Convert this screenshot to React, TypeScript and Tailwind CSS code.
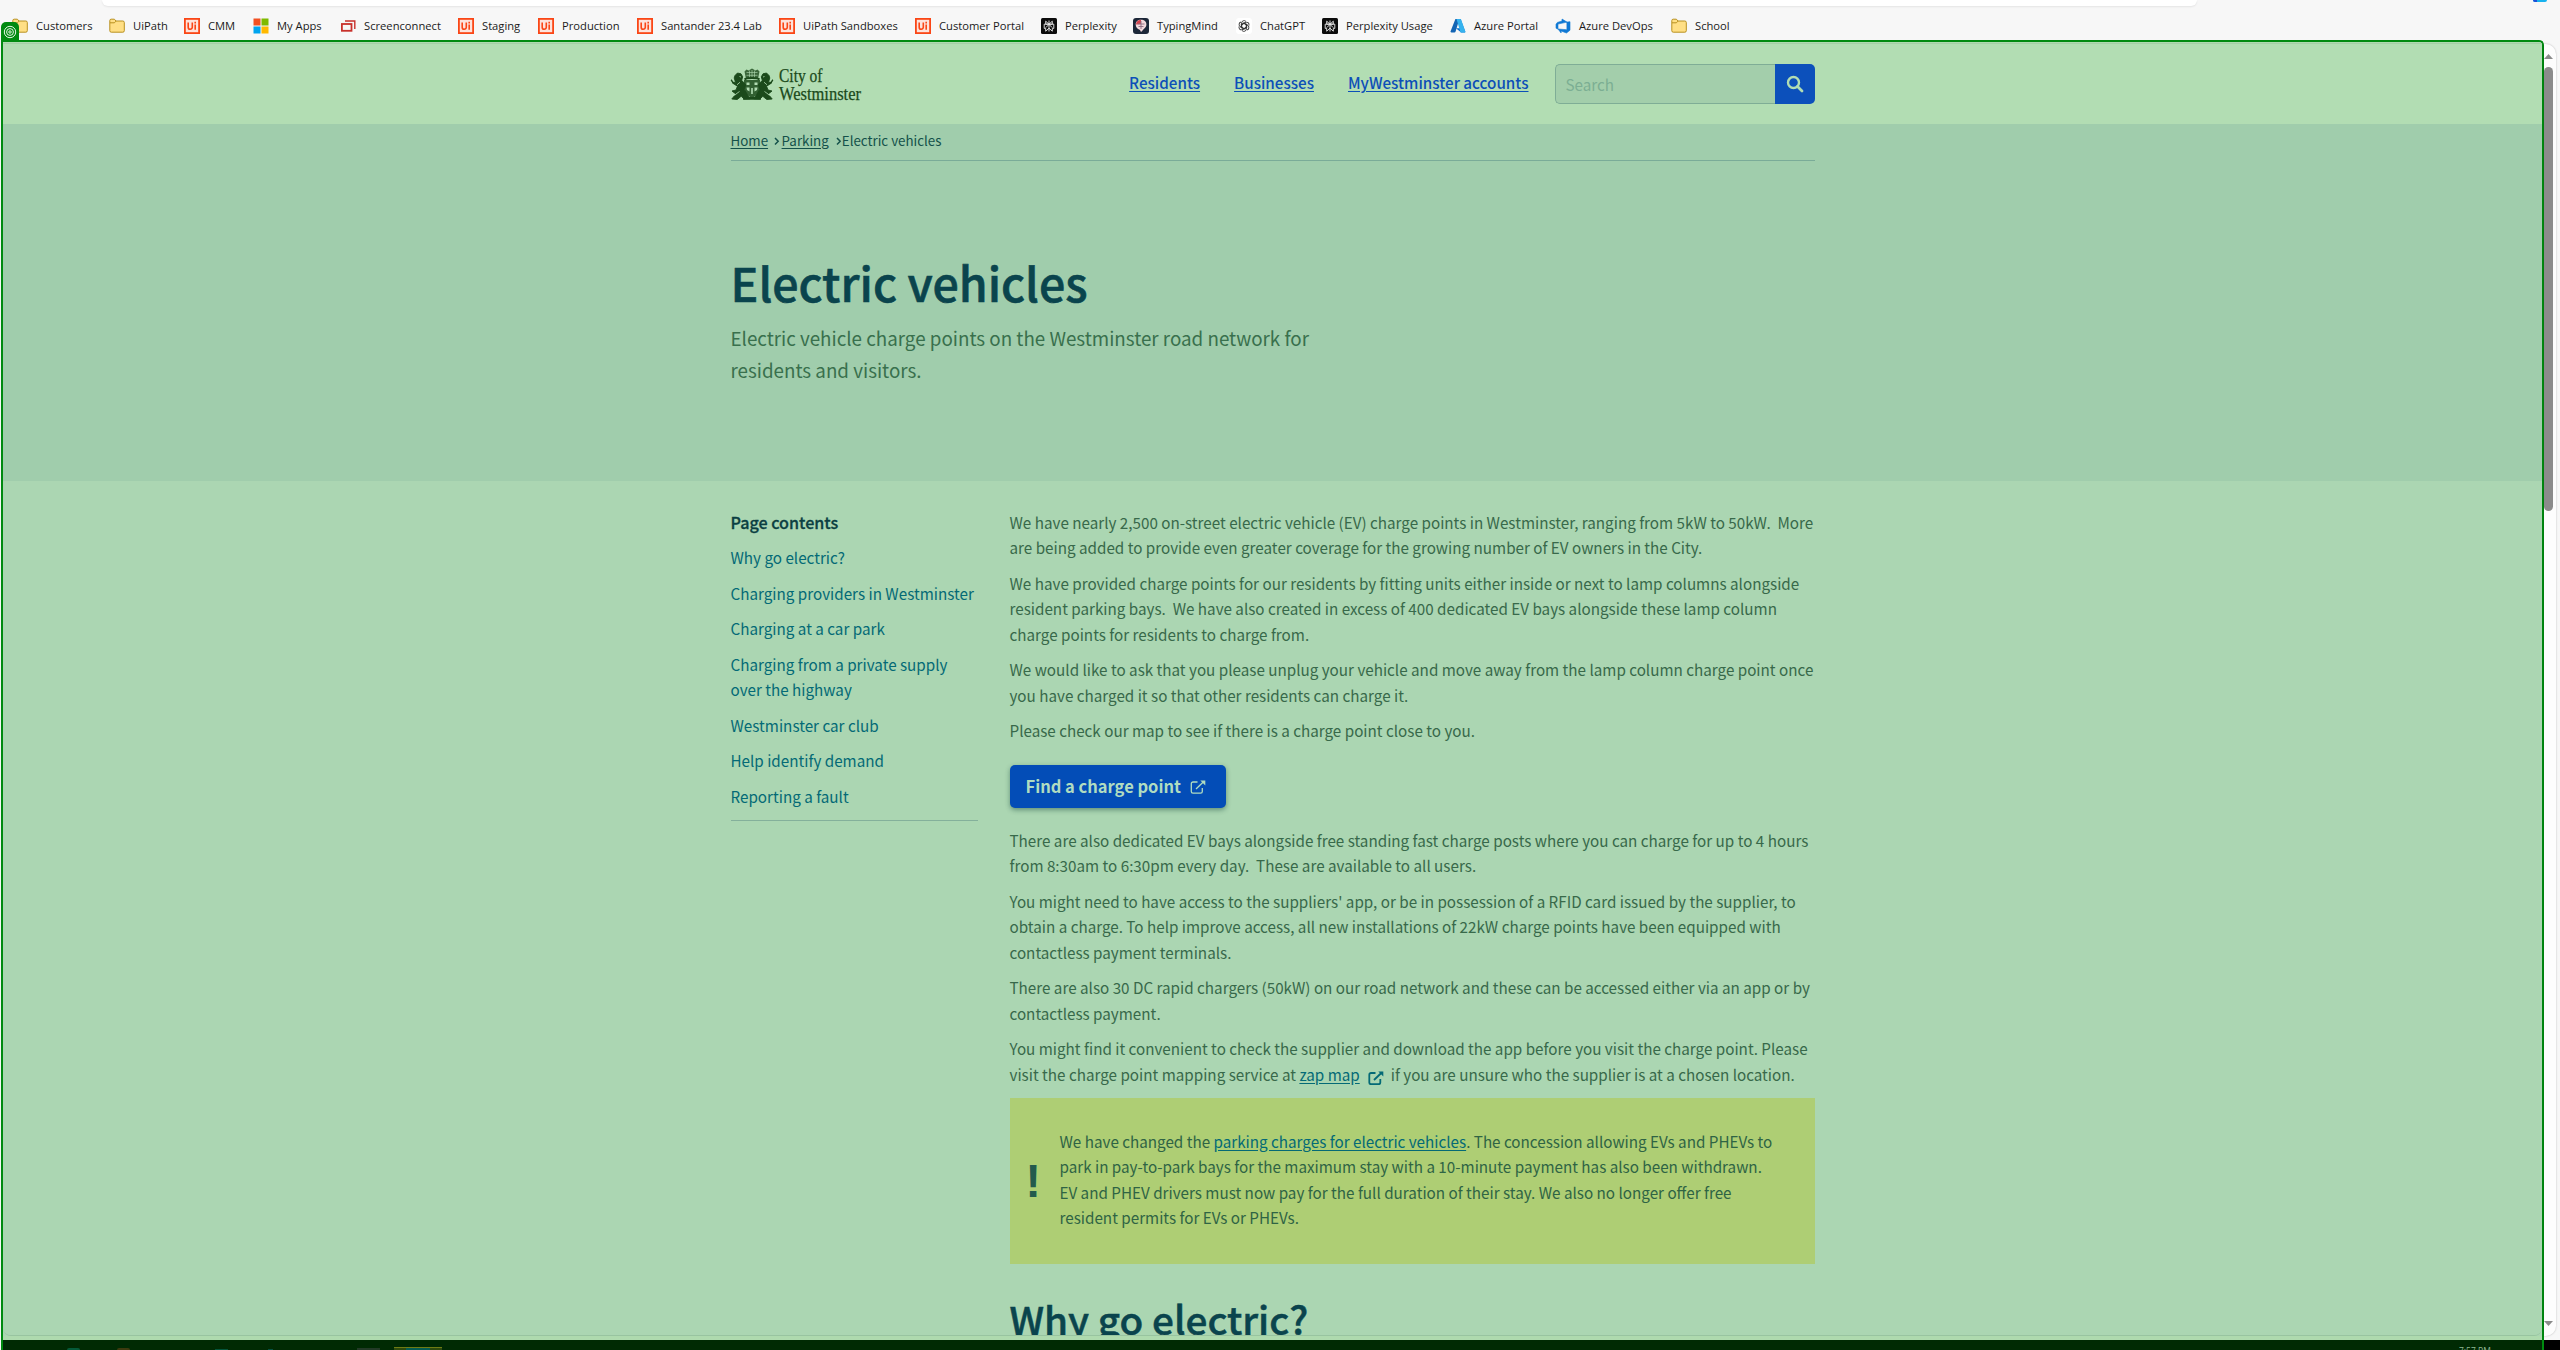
import type { ReactNode } from "react";

function Folder() {
  return (
    <svg width="16" height="16" viewBox="0 0 16 16">
      <path d="M.8 4V2.6A1.4 1.4 0 0 1 2.2 1.2h3.2L7 3h6.8a1.5 1.5 0 0 1 1.5 1.5v8.2a1.5 1.5 0 0 1-1.5 1.5H2.3a1.5 1.5 0 0 1-1.5-1.5z" fill="#ffdf85" stroke="#b8901f" strokeWidth="1" />
      <path d="M1 4.8h4.4L7 3.1" fill="none" stroke="#b8901f" strokeWidth="1" />
    </svg>
  );
}

function UiIcon() {
  return (
    <svg width="16" height="16" viewBox="0 0 16 16">
      <rect width="16" height="16" fill="#fa4616" />
      <rect x="1.8" y="1.8" width="12.4" height="12.4" fill="#fde3dc" />
      <path d="M4.2 4.4v4.8a2 2 0 0 0 4.1 0V4.4" fill="none" stroke="#fa4616" strokeWidth="1.6" />
      <path d="M11.2 6.6v5.2M11.2 3.8v1.6" stroke="#fa4616" strokeWidth="1.6" />
    </svg>
  );
}

function Microsoft() {
  return (
    <svg width="16" height="16" viewBox="0 0 16 16">
      <rect x=".5" y=".5" width="7" height="7" fill="#f25022" />
      <rect x="8.5" y=".5" width="7" height="7" fill="#7fba00" />
      <rect x=".5" y="8.5" width="7" height="7" fill="#00a4ef" />
      <rect x="8.5" y="8.5" width="7" height="7" fill="#ffb900" />
    </svg>
  );
}

function ScreenConnect() {
  return (
    <svg width="16" height="16" viewBox="0 0 16 16" fill="none" stroke="#c8312b">
      <rect x="1.9" y="6" width="9.6" height="6.8" strokeWidth="1.8" />
      <path d="M5 3h9.8v8" strokeWidth="1.4" />
    </svg>
  );
}

function PerplexityIcon() {
  return (
    <svg width="16" height="16" viewBox="0 0 16 16">
      <rect width="16" height="16" rx="1.5" fill="#0c0c0c" />
      <path d="M8 2.5v11M4.7 3.2 8 6.2l3.3-3v3H4.7zM3.2 6.2h9.6v4.2h-1.5v2.8L8 10.2l-3.3 3v-2.8H3.2zM8 6.4l-3.2 3.2M8 6.4l3.2 3.2" fill="none" stroke="#eee" strokeWidth=".9" />
    </svg>
  );
}

function TypingMind() {
  return (
    <svg width="16" height="16" viewBox="0 0 16 16">
      <rect width="16" height="16" rx="3" fill="#1c2738" />
      <path d="M8 1.8c3.4 0 5.4 2 5.4 4.6 0 3-2.6 4.2-4.6 6.8L8 14l-1-2C4 10.600 2.700 9 2.700 6.400 2.700 3.800 4.800 1.800 8 1.800z" fill="#f3d9dc" />
      <path d="M3 6.500C3 4 4.500 2 8 1.800V6z" fill="#d6454f" />
      <path d="M4.500 6h7M5.500 8.500h5M8 3v8" stroke="#8d6b80" strokeWidth=".9" />
    </svg>
  );
}

function ChatGpt() {
  return (
    <svg width="16" height="16" viewBox="0 0 16 16">
      <rect width="16" height="16" rx="3" fill="#fff" />
      <g fill="none" stroke="#333" strokeWidth=".9">
        {[0, 60, 120, 180, 240, 300].map((a) => (
          <path key={a} transform={`rotate(${a} 8 8)`} d="M5.600 9.300V5.200a2.500 2.500 0 0 1 4.400-1.700M7.100 4.900l3.500 2v3.500" />
        ))}
      </g>
    </svg>
  );
}

function AzureIcon() {
  return (
    <svg width="16" height="16" viewBox="0 0 16 16">
      <path d="M5.400 1h4L5.600 13.600c-.2.600-.6.900-1.200.9H1.400c-.7 0-1.100-.6-.8-1.200z" fill="#1465b4" />
      <path d="M9.400 1h1.200l4.700 12.400c.2.600-.2 1.100-.8 1.100h-3.300L5.900 10.300h5z" fill="#0a6fd0" />
      <path d="M6.500 1h3.800c.4 0 .7.300.8.600l4.200 11.800c.2.600-.2 1.100-.8 1.100h-4z" fill="#35b2ee" />
    </svg>
  );
}

function DevOps() {
  return (
    <svg width="16" height="16" viewBox="0 0 16 16">
      <path d="M15 3.700v8.500l-3.500 2.800-5.400-2v2L3 11l8.900.7V4.100zM12 4.100 7 1v2L2.400 4.400 1 6.200v4l2 .9V6.100z" fill="#0f78d4" stroke="#0f78d4" strokeWidth=".6" />
    </svg>
  );
}

const bookmarks: { label: string; icon: ReactNode; width: string }[] = [
  { label: "Customers", icon: <Folder />, width: "w-[97px]" },
  { label: "UiPath", icon: <Folder />, width: "w-[75px]" },
  { label: "CMM", icon: <UiIcon />, width: "w-[69px]" },
  { label: "My Apps", icon: <Microsoft />, width: "w-[87px]" },
  { label: "Screenconnect", icon: <ScreenConnect />, width: "w-[118px]" },
  { label: "Staging", icon: <UiIcon />, width: "w-[80px]" },
  { label: "Production", icon: <UiIcon />, width: "w-[99px]" },
  { label: "Santander 23.4 Lab", icon: <UiIcon />, width: "w-[142px]" },
  { label: "UiPath Sandboxes", icon: <UiIcon />, width: "w-[136px]" },
  { label: "Customer Portal", icon: <UiIcon />, width: "w-[126px]" },
  { label: "Perplexity", icon: <PerplexityIcon />, width: "w-[92px]" },
  { label: "TypingMind", icon: <TypingMind />, width: "w-[103px]" },
  { label: "ChatGPT", icon: <ChatGpt />, width: "w-[86px]" },
  { label: "Perplexity Usage", icon: <PerplexityIcon />, width: "w-[128px]" },
  { label: "Azure Portal", icon: <AzureIcon />, width: "w-[105px]" },
  { label: "Azure DevOps", icon: <DevOps />, width: "w-[116px]" },
  { label: "School", icon: <Folder />, width: "w-[80px]" },
];

function BrowserBar() {
  return (
    <div className="h-10 bg-[#f7f7f7]">
      <div className="h-[6px] pl-[102px]">
        <div className="h-[6px] w-[2095px] rounded-b-[10px] bg-white shadow-[0_1px_2px_rgba(0,0,0,0.08)]" />
      </div>
      <div className="flex h-[34px] items-center pt-[6px] pl-3 font-['Open_Sans',sans-serif] text-[11.2px] text-[#1b1b1b]">
        {bookmarks.map((b, i) => (
          <div key={i} className={`flex shrink-0 items-center gap-2 whitespace-nowrap ${b.width}`}>
            {b.icon}
            <span>{b.label}</span>
          </div>
        ))}
      </div>
    </div>
  );
}

const lion =
  "M4 7.500 6.500 5l3.500.8 1.700 3-1 3.500 4 4.500-1.500 4.500 3 5 3 4.500-6 .3-3-2.800-4 3.200L.8 31l2.500-3 2.700-1.500-2.500-1.500L1 23l4-1 1.500-4-3-1.500L1 14.500l3.500-.3L3.200 10z";

function Supporter() {
  return (
    <>
      <path d={lion} stroke="#1b4a1b" strokeWidth=".9" strokeLinejoin="round" />
      <path d="M0 12c1 .5 1.200 2 3 3.500" stroke="#1b4a1b" strokeWidth="1.400" fill="none" />
      <path d="M6 16.800l3-2.600M5 26l3.500-2.500M8.500 8.500l1.500.5" stroke="#b2dcb3" strokeWidth=".8" />
    </>
  );
}

function Logo() {
  return (
    <svg width="132" height="34" viewBox="0 0 132 34" fill="#1b4a1b" overflow="visible">
      <g>
        <path d="M13.500 3.500 15.500 1.500l2 1L21 .5l3.500 2 2-1 2 2L27 11H15z" opacity=".8" />
        <path d="M15.500 4.500h11M15.500 7.300h11M18.500 2.500v7M21 2v8M23.500 2.500v7" stroke="#b2dcb3" strokeWidth=".6" />
        <path d="M13 12h16v8c0 5-4 8-8 10-4-2-8-5-8-10z" opacity=".85" />
        <path d="M15.500 14.500h3v2.500h-3zM23.500 14.500h3v2.500h-3zM15.500 19.500h3v4l-2.500-1.500zM23.500 19.500h3l-.5 2.500-2.500 1.500zM20.200 20h1.600v6h-1.600z" fill="#b2dcb3" />
        <path d="M13.500 11.500c2-2 13-2 15 0" stroke="#1b4a1b" strokeWidth="1.800" fill="none" />
        <Supporter />
        <g transform="matrix(-1 0 0 1 42 0)">
          <Supporter />
        </g>
        <path d="M12 29h18v2.700H12z" />
      </g>
      <g className="font-['Liberation_Serif',serif] text-[18px]" stroke="#1b4a1b" strokeWidth=".25">
        <text x="48" y="14" textLength="43.500" lengthAdjust="spacingAndGlyphs">City of</text>
        <text x="48" y="32" textLength="82" lengthAdjust="spacingAndGlyphs">Westminster</text>
      </g>
    </svg>
  );
}

function External({ bold = false }: { bold?: boolean }) {
  return (
    <svg width="16" height="14" viewBox="0 0 16 14" fill="none" stroke="currentColor" strokeWidth={bold ? 1.8 : 1.3} className="inline-block">
      <path d="M7.500 2H3a1.700 1.700 0 0 0-1.700 1.700v7.800A1.700 1.700 0 0 0 3 13.200h7.600a1.700 1.700 0 0 0 1.700-1.700V8" />
      <path d="M6 9 13.800 1.500" />
      <path d="M10.300.4h5v5z" fill="currentColor" stroke="none" />
    </svg>
  );
}

function Header() {
  return (
    <header className="flex h-[80px] shrink-0 justify-center bg-[#b2ddb3]">
      <div className="flex h-[80px] w-[1084px]">
        <div className="pt-[24px]">
          <Logo />
        </div>
        <nav className="ml-auto flex pt-[24px] text-[15.22px] leading-[28px] font-medium text-[#0c4fb8]">
          <a className="mr-[34px] underline underline-offset-[2px]">Residents</a>
          <a className="mr-[34px] underline underline-offset-[2px]">Businesses</a>
          <a className="mr-[26px] underline underline-offset-[2px]">MyWestminster accounts</a>
        </nav>
        <div className="mt-5 flex h-10">
          <div className="flex w-[220px] items-center rounded-l-[5px] border border-r-0 border-[#7fad96] bg-[#a3ceab] pl-[10px] text-[15.22px] text-[#7cae93]">
            Search
          </div>
          <div className="flex w-10 items-center justify-center rounded-r-[5px] bg-[#0c50bb]">
            <svg width="18" height="18" viewBox="0 0 18 18" fill="none" stroke="#b2ddb3">
              <circle cx="7.500" cy="7.500" r="5.500" strokeWidth="2.400" />
              <path d="m11.500 11.500 4.500 4.500" strokeWidth="2.800" strokeLinecap="round" />
            </svg>
          </div>
        </div>
      </div>
    </header>
  );
}

function Chevron() {
  return (
    <svg width="6" height="9" viewBox="0 0 6 9" fill="none" stroke="#14514a" strokeWidth="1.500">
      <path d="m1 1 3.200 3.300L1 7.600" />
    </svg>
  );
}

function Hero() {
  return (
    <section className="flex h-[357px] shrink-0 justify-center bg-[#a0cdac]">
      <div className="w-[1084px]">
        <div className="flex h-[37px] items-center border-b border-[#7aab98] pb-[2px] text-[13.35px] leading-[20px] text-[#14514a]">
          <a className="underline underline-offset-[2px]">Home</a>
          <span className="ml-[6px] mr-[1.5px]"><Chevron /></span>
          <a className="underline underline-offset-[2px]">Parking</a>
          <span className="ml-[7px]"><Chevron /></span>
          <span>Electric vehicles</span>
        </div>
        <h1 className="mt-[91px] text-[46.5px] leading-[60px] font-medium text-[#0a444d] [-webkit-text-stroke:0.6px_#0a444d]">Electric vehicles</h1>
        <p className="mt-[10px] text-[18.8px] leading-[32px] whitespace-nowrap text-[#39704d]">
          Electric vehicle charge points on the Westminster road network for
          <br />
          residents and visitors.
        </p>
      </div>
    </section>
  );
}

const contents = [
  "Why go electric?",
  "Charging providers in Westminster",
  "Charging at a car park",
  "Charging from a private supply over the highway",
  "Westminster car club",
  "Help identify demand",
  "Reporting a fault",
];

function Lines({ lines }: { lines: string[] }) {
  return <p className="shrink-0 whitespace-pre">{lines.join("\n")}</p>;
}

function Content() {
  return (
    <div className="flex min-h-0 flex-1 justify-center overflow-hidden bg-[#abd6b2] text-[15.22px] leading-[25.5px]">
      <div className="flex w-[1084px] pt-[28.5px]">
        <aside className="flex h-[311.5px] w-[247px] shrink-0 flex-col gap-[10px] border-b border-[#84b09b] text-[#046a76]">
          <h3 className="text-[16.1px] font-medium text-[#0b3f42] [-webkit-text-stroke:0.3px_#0b3f42]">Page contents</h3>
          {contents.map((c) => (
            <a key={c}>{c}</a>
          ))}
        </aside>
        <main className="ml-8 flex w-[805px] shrink-0 flex-col gap-[10px] text-[#38694a]">
          <Lines
            lines={[
              "We have nearly 2,500 on-street electric vehicle (EV) charge points in Westminster, ranging from 5kW to 50kW.  More",
              "are being added to provide even greater coverage for the growing number of EV owners in the City.",
            ]}
          />
          <Lines
            lines={[
              "We have provided charge points for our residents by fitting units either inside or next to lamp columns alongside",
              "resident parking bays.  We have also created in excess of 400 dedicated EV bays alongside these lamp column",
              "charge points for residents to charge from.",
            ]}
          />
          <Lines
            lines={[
              "We would like to ask that you please unplug your vehicle and move away from the lamp column charge point once",
              "you have charged it so that other residents can charge it.",
            ]}
          />
          <Lines lines={["Please check our map to see if there is a charge point close to you."]} />
          <a className="mt-[11.5px] mb-[9.5px] flex h-[43px] w-[216px] shrink-0 items-center gap-[9px] rounded-[5px] bg-[#034db7] pl-4 text-[16.5px] font-bold text-[#b0dcc0] shadow-[0_2px_5px_rgba(10,60,50,0.45)]">
            Find a charge point
            <External />
          </a>
          <Lines
            lines={[
              "There are also dedicated EV bays alongside free standing fast charge posts where you can charge for up to 4 hours",
              "from 8:30am to 6:30pm every day.  These are available to all users.",
            ]}
          />
          <Lines
            lines={[
              "You might need to have access to the suppliers' app, or be in possession of a RFID card issued by the supplier, to",
              "obtain a charge. To help improve access, all new installations of 22kW charge points have been equipped with",
              "contactless payment terminals.",
            ]}
          />
          <Lines
            lines={[
              "There are also 30 DC rapid chargers (50kW) on our road network and these can be accessed either via an app or by",
              "contactless payment.",
            ]}
          />
          <p className="h-[51px] shrink-0 whitespace-nowrap">
            You might find it convenient to check the supplier and download the app before you visit the charge point. Please
            <br />
            visit the charge point mapping service at <a className="text-[#046a76] underline underline-offset-[2px]">zap map</a>
            <span className="mr-[7px] ml-[8px] inline-block h-[14px] align-[-2px] leading-none text-[#046a76]">
              <External bold />
            </span>
            if you are unsure who the supplier is at a chosen location.
          </p>
          <div className="mt-[1px] flex h-[166px] shrink-0 bg-[#aece74] text-[#2f6444]">
            <div className="w-[50px] shrink-0 pt-[58px] pl-[16px] font-['Liberation_Sans',sans-serif] text-[46px] leading-[50px] font-bold text-[#245a4d]">!</div>
            <p className="pt-[30.5px] whitespace-nowrap">
              We have changed the <a className="text-[#046a76] underline underline-offset-[2px]">parking charges for electric vehicles</a>. The concession allowing EVs and PHEVs to
              <br />
              park in pay-to-park bays for the maximum stay with a 10-minute payment has also been withdrawn.
              <br />
              EV and PHEV drivers must now pay for the full duration of their stay. We also no longer offer free
              <br />
              resident permits for EVs or PHEVs.
            </p>
          </div>
          <h2 className="mt-[19px] shrink-0 text-[38.7px] leading-[50px] font-medium whitespace-nowrap text-[#0a444d] [-webkit-text-stroke:0.5px_#0a444d]">Why go electric?</h2>
        </main>
      </div>
    </div>
  );
}

function Scrollbar() {
  return (
    <div className="mt-1 flex h-[1292px] w-[12px] flex-col items-start rounded-r-[10px] bg-[#fdfdfd] shadow-[0_0_2px_rgba(0,0,0,0.25)]">
      <svg width="9" height="5" className="mt-[10px]"><path d="M4.500 0 9 5H0z" fill="#8b8b8b" /></svg>
      <div className="mt-2 h-[444px] w-[9px] rounded-full bg-[#8b8b8b]" />
      <svg width="9" height="5" className="mt-auto mb-[10px]"><path d="M0 0h9L4.500 5z" fill="#8b8b8b" /></svg>
    </div>
  );
}

function Taskbar() {
  return (
    <div className="flex h-[10px] shrink-0 items-end overflow-hidden bg-[#002a03]">
      <div className="ml-[64px] h-[2px] w-[13px] rounded-t-full bg-[#045a38]" />
      <div className="ml-[37px] h-[2px] w-[13px] rounded-t-full bg-[#3c3a0e]" />
      <div className="ml-[85px] h-px w-[13px] bg-[#04553a]" />
      <div className="ml-[40px] h-px w-[5px] bg-[#045040]" />
      <div className="ml-[84px] h-[2px] w-[23px] bg-[#223a26]" />
      <div className="ml-[14px] flex h-[3px] w-[48px] justify-center border-t border-[#6f7c14] bg-[#2c4a0c]">
        <div className="h-[2px] w-6 bg-[#045c50]" />
      </div>
      <div className="ml-auto h-[3px] w-[83px] overflow-hidden font-['Open_Sans',sans-serif] text-[8.5px] leading-[8px] text-[#8fb894]">7:57 PM</div>
    </div>
  );
}

export default function App() {
  return (
    <div className="relative h-[1350px] w-[2560px] overflow-hidden bg-[#f7f7f7] font-['Noto_Sans_CJK_SC',sans-serif]">
      <BrowserBar />
      <div className="flex h-[1310px]">
        <div className="ml-px flex w-[2543px] shrink-0 flex-col overflow-hidden rounded-tr-[5px] border-2 border-b-0 border-[#008a10] bg-[#abd6b2]">
          <div className="h-[2px] shrink-0 border-b border-[#a4cfa6] bg-[#b0dab1]" />
          <div className="flex h-[1292px] shrink-0 flex-col overflow-hidden rounded-b-[8px] border-b border-[#98c4a0]">
            <Header />
            <Hero />
            <Content />
          </div>
          <div className="h-[4px] shrink-0 bg-[#aedaae]" />
          <Taskbar />
        </div>
        <div className="flex w-4 flex-col">
          <Scrollbar />
          <div className="mt-[4px] h-[10px] bg-black" />
        </div>
      </div>
      <div className="absolute top-[22px] left-px flex h-[19px] w-[18px] items-center justify-center rounded-t-[5px] bg-[#008a10]">
        <svg width="14" height="14" viewBox="0 0 14 14" fill="none" stroke="#e4f5e4">
          <circle cx="7" cy="7" r="5.700" strokeWidth="1" />
          <circle cx="7" cy="7" r="3.400" strokeWidth="1" />
          <circle cx="7" cy="7" r="1.200" strokeWidth="1" />
        </svg>
      </div>
      <div className="absolute top-0 right-[13px] flex h-[2px] w-[14px] overflow-hidden rounded-b-full bg-[#17b2ee]">
        <div className="h-full w-1 bg-[#1d4fd8]" />
      </div>
    </div>
  );
}
